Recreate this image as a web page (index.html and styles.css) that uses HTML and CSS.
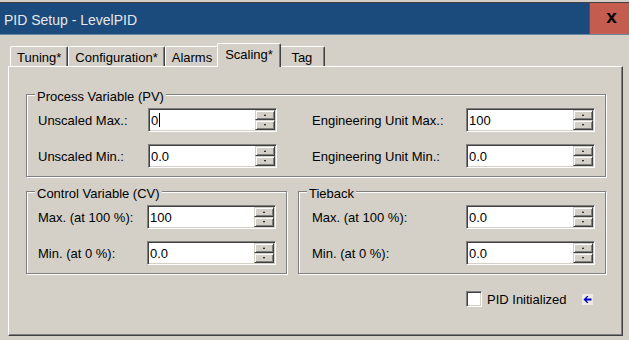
FILE: index.html
```html
<!DOCTYPE html>
<html lang="en">
<head>
    <meta charset="UTF-8">
    <meta name="viewport" content="width=device-width, initial-scale=1.0">
    <title>PID Setup - LevelPID</title>
    <link rel="stylesheet" href="styles.css">
</head>
<body>
    <div class="window">
        <div class="titlebar">
            <span class="title">PID Setup - LevelPID</span>
            <span class="close">x</span>
        </div>

        <div class="dialog">
            <div class="tabs">
                <div class="tab">Tuning*</div>
                <div class="tab">Configuration*</div>
                <div class="tab">Alarms</div>
                <div class="tab active">Scaling*</div>
                <div class="tab">Tag</div>
            </div>

            <div class="panel">
                <div class="group pv">
                    <div class="group-title">Process Variable (PV)</div>
                    <div class="grid">
                        <span>Unscaled Max.:</span>
                        <div class="field">
                            <div class="value">0<span class="caret"></span></div>
                            <div class="spin">
                                <div class="spin-btn"><i class="arrow-up"></i></div>
                                <div class="spin-btn"><i class="arrow-down"></i></div>
                            </div>
                        </div>
                        <span>Engineering Unit Max.:</span>
                        <div class="field">
                            <div class="value">100</div>
                            <div class="spin">
                                <div class="spin-btn"><i class="arrow-up"></i></div>
                                <div class="spin-btn"><i class="arrow-down"></i></div>
                            </div>
                        </div>

                        <span>Unscaled Min.:</span>
                        <div class="field">
                            <div class="value">0.0</div>
                            <div class="spin">
                                <div class="spin-btn"><i class="arrow-up"></i></div>
                                <div class="spin-btn"><i class="arrow-down"></i></div>
                            </div>
                        </div>
                        <span>Engineering Unit Min.:</span>
                        <div class="field">
                            <div class="value">0.0</div>
                            <div class="spin">
                                <div class="spin-btn"><i class="arrow-up"></i></div>
                                <div class="spin-btn"><i class="arrow-down"></i></div>
                            </div>
                        </div>
                    </div>
                </div>

                <div class="group-row">
                    <div class="group cv">
                        <div class="group-title">Control Variable (CV)</div>
                        <div class="grid">
                            <span>Max. (at 100 %):</span>
                            <div class="field">
                                <div class="value">100</div>
                                <div class="spin">
                                    <div class="spin-btn"><i class="arrow-up"></i></div>
                                    <div class="spin-btn"><i class="arrow-down"></i></div>
                                </div>
                            </div>
                            <span>Min. (at 0 %):</span>
                            <div class="field">
                                <div class="value">0.0</div>
                                <div class="spin">
                                    <div class="spin-btn"><i class="arrow-up"></i></div>
                                    <div class="spin-btn"><i class="arrow-down"></i></div>
                                </div>
                            </div>
                        </div>
                    </div>

                    <div class="group tieback">
                        <div class="group-title">Tieback</div>
                        <div class="grid">
                            <span>Max. (at 100 %):</span>
                            <div class="field">
                                <div class="value">0.0</div>
                                <div class="spin">
                                    <div class="spin-btn"><i class="arrow-up"></i></div>
                                    <div class="spin-btn"><i class="arrow-down"></i></div>
                                </div>
                            </div>
                            <span>Min. (at 0 %):</span>
                            <div class="field">
                                <div class="value">0.0</div>
                                <div class="spin">
                                    <div class="spin-btn"><i class="arrow-up"></i></div>
                                    <div class="spin-btn"><i class="arrow-down"></i></div>
                                </div>
                            </div>
                        </div>
                    </div>
                </div>

                <div class="init-row">
                    <span class="checkbox"></span>
                    <span class="init-label">PID Initialized</span>
                    <svg class="status-icon" width="11" height="11" viewBox="0 0 11 11">
                        <rect width="11" height="11" fill="#ecebe3"/>
                        <path d="M1.5 5.5 L5 2 L6.5 2 L4.5 4.5 L9.5 4.5 L9.5 6.5 L4.5 6.5 L6.5 9 L5 9 Z" fill="#0000c4"/>
                    </svg>
                </div>
            </div>
        </div>
    </div>
</body>
</html>
```

FILE: styles.css
```css
* {
    box-sizing: border-box;
}

body {
    margin: 0;
    width: 629px;
    height: 340px;
    overflow: hidden;
    background-color: #d4d0c8;
    font-family: "Liberation Sans", Arial, sans-serif;
    font-size: 13px;
    color: #000;
    white-space: nowrap;
}

.window {
    padding-top: 2px;
}

.titlebar {
    display: flex;
    height: 33px;
    border-top: 1px solid #404040;
    border-bottom: 1px solid #6b87a6;
    background-color: #1b4a7c;
}

.title {
    flex: 1;
    padding: 4px 0 0 4px;
    font-size: 14px;
    line-height: 27px;
    color: #e8e8e8;
}

.close {
    display: flex;
    align-items: center;
    justify-content: center;
    width: 40px;
    padding: 0 0 3px 4px;
    background-color: #c45c50;
    border-left: 1px solid #8a3d35;
    font: bold 19px "Liberation Sans", Arial, sans-serif;
    color: #000;
}

.dialog {
    padding: 8px 0 0 8px;
}

/* tab strip */
.tabs {
    display: flex;
    align-items: flex-end;
    padding-left: 2px;
}

.tab {
    min-width: 46px;
    height: 20px;
    padding: 3px 6px 0;
    line-height: 16px;
    text-align: center;
    border: 1px solid;
    border-color: #fff #404040 transparent #fff;
    border-bottom: none;
    border-radius: 2px 2px 0 0;
    box-shadow: inset -1px 0 #808080;
}

.tab.active {
    position: relative;
    height: 24px;
    margin: 0 -2px -1px;
    padding: 3px 7px 0;
    background-color: #d4d0c8;
}

.panel {
    width: 615px;
    border: 1px solid;
    border-color: #fff #404040 #404040 #fff;
    box-shadow: inset -1px -1px #808080;
    padding: 27px 16px 28px 17px;
}

/* group boxes */
.group {
    border: 1px solid #808080;
    box-shadow: inset 1px 1px #fff, 1px 1px #fff;
}

.group-title {
    width: max-content;
    margin: -6px 0 0 8px;
    padding: 0 2px;
    line-height: 16px;
    background-color: #d4d0c8;
}

.grid {
    display: grid;
    align-items: center;
    row-gap: 12px;
    padding: 3px 10px 8px 11px;
}

.pv .grid {
    grid-template-columns: 110px 164px 154px 129px;
}

.cv .grid {
    grid-template-columns: 109px 129px;
}

.tieback .grid {
    grid-template-columns: 154px 129px;
    padding-left: 13px;
}

.group-row {
    display: flex;
    gap: 11px;
    margin-top: 14px;
}

.tieback {
    flex: 1;
}

/* spin edit */
.field {
    display: flex;
    width: 129px;
    height: 24px;
    padding: 1px;
    background-color: #fff;
    border: 1px solid;
    border-color: #808080 #fff #fff #808080;
    box-shadow: inset 1px 1px #404040, inset -1px -1px #d4d0c8;
}

.value {
    flex: 1;
    display: flex;
    align-items: center;
    padding-left: 1px;
}

.caret {
    width: 1px;
    height: 14px;
    margin-left: 1px;
    background-color: #000;
}

.spin {
    display: flex;
    flex-direction: column;
    width: 20px;
}

.spin-btn {
    flex: 1;
    display: flex;
    align-items: center;
    justify-content: center;
    background-color: #d4d0c8;
    border: 1px solid;
    border-color: #d4d0c8 #404040 #404040 #d4d0c8;
    box-shadow: inset 1px 1px #fff, inset -1px -1px #808080;
}

.arrow-up,
.arrow-down {
    width: 1px;
    height: 0;
    border-left: 1px solid transparent;
    border-right: 1px solid transparent;
}

.arrow-up {
    border-bottom: 2px solid #000;
}

.arrow-down {
    border-top: 2px solid #000;
}

/* bottom row */
.init-row {
    display: flex;
    align-items: center;
    margin: 17px 0 0 440px;
}

.checkbox {
    width: 16px;
    height: 16px;
    background-color: #fff;
    border: 1px solid;
    border-color: #808080 #fff #fff #808080;
    box-shadow: inset 1px 1px #404040, inset -1px -1px #d4d0c8;
}

.init-label {
    margin-left: 5px;
}

.status-icon {
    margin-left: 16px;
}
```
